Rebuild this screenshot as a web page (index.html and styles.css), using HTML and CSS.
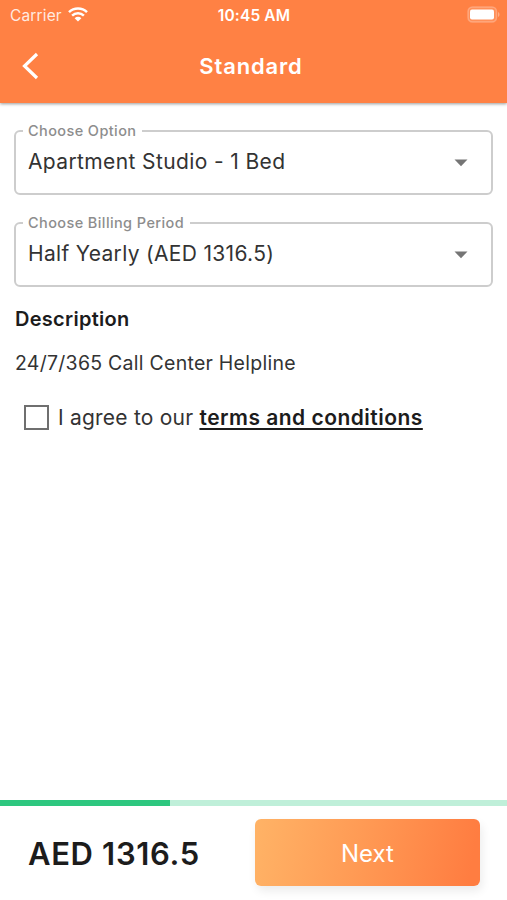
FILE: index.html
```html
<!DOCTYPE html>
<html lang="en">
<head>
<meta charset="utf-8">
<title>Standard</title>
<link rel="stylesheet" href="styles.css">
</head>
<body>
<div class="screen">
  <header class="header">
    <div class="status">
      <div class="status-left">
        <span class="carrier">Carrier</span>
        <svg class="wifi" width="20" height="15" viewBox="0 0 20 15" fill="none" stroke="#fff" stroke-width="2.5">
          <path d="M1 5.1C6 .2 14 .2 19 5.1"/>
          <path d="M4.1 8.6c3.4-3.2 8.4-3.2 11.8 0"/>
          <path d="M10 14.6L6.600 11.200c2-1.800 4.800-1.800 6.800 0z" fill="#fff" stroke="none"/>
        </svg>
      </div>
      <span class="clock">10:45 AM</span>
      <div class="status-right">
        <svg width="34" height="18" viewBox="0 0 34 18">
          <rect x="1" y="1" width="28.500" height="15" rx="4.500" fill="#fff" fill-opacity=".12" stroke="#fff" stroke-opacity=".25" stroke-width="1.500"/>
          <rect x="3" y="3.500" width="24" height="10" rx="2" fill="#fff"/>
          <path d="M31 6v5c2-.8 2-4.200 0-5z" fill="#fff" fill-opacity=".35"/>
        </svg>
      </div>
    </div>
    <div class="navbar">
      <svg class="back" width="18" height="28" viewBox="0 0 18 28" fill="none" stroke="#fff" stroke-width="3.200"><path d="M16 2L3.500 14l12.500 12"/></svg>
      <h1 class="title">Standard</h1>
    </div>
  </header>
  <main class="content">
    <fieldset class="field">
      <legend class="label">Choose Option</legend>
      <div class="select"><span class="value">Apartment Studio - 1 Bed</span><svg width="14" height="8" viewBox="0 0 14 8"><path d="M.5.500h13L7 7.300z" fill="#757575"/></svg></div>
    </fieldset>
    <fieldset class="field">
      <legend class="label">Choose Billing Period</legend>
      <div class="select"><span class="value value-period">Half Yearly (AED 1316.5)</span><svg width="14" height="8" viewBox="0 0 14 8"><path d="M.5.500h13L7 7.300z" fill="#757575"/></svg></div>
    </fieldset>
    <h2 class="heading">Description</h2>
    <p class="text">24/7/365 Call Center Helpline</p>
    <div class="agree">
      <span class="checkbox"></span>
      <p class="agree-text">I agree to our <a class="terms">terms and conditions</a></p>
    </div>
  </main>
  <footer class="footer">
    <div class="progress"><div class="progress-bar"></div></div>
    <div class="actions">
      <div class="price">AED 1316.5</div>
      <button class="next">Next</button>
    </div>
  </footer>
</div>
</body>
</html>
```

FILE: styles.css
```css
* { box-sizing: border-box; }
body { margin: 0; font-family: Inter, "Liberation Sans", sans-serif; background: #fff; color: #333; }
h1, h2, p { margin: 0; }
svg { display: block; }
.screen { width: 507px; height: 900px; display: flex; flex-direction: column; white-space: nowrap; overflow: hidden; }
.header { height: 103px; flex: none; background: #ff8144; color: #fff; box-shadow: 0 1px 3px rgba(0, 0, 0, .4); }
.status { height: 30px; padding: 0 6px 0 10px; display: grid; grid-template-columns: 1fr auto 1fr; align-items: center; }
.status-left { display: flex; align-items: center; gap: 6px; color: rgba(255, 255, 255, .85); }
.status-right { display: flex; justify-content: flex-end; padding-bottom: 1px; }
.wifi { margin-top: -1px; }
.carrier { font-size: 15.5px; letter-spacing: .15px; }
.clock { font-size: 15.5px; font-weight: 600; letter-spacing: .15px; margin-left: -3px; }
.navbar { height: 73px; display: grid; grid-template-columns: 1fr auto 1fr; align-items: center; padding: 0 6px 2px 21px; }
.navbar::after { content: ""; }
.title { font-size: 22px; font-weight: 600; letter-spacing: .85px; margin-left: -20px; }
.content { flex: 1; padding: 20px 14px 0; }
.field { height: 72px; margin: 0 0 20px; padding: 0 23px 0 7px; border: 2px solid #cdcdcd; border-radius: 6px; min-width: 0; }
.label { height: 15px; padding: 0 6px 0 5px; font-size: 14.5px; line-height: 16px; font-weight: 500; color: #8d8d8d; letter-spacing: .4px; }
.select { height: 46px; display: flex; align-items: center; justify-content: space-between; padding-left: 5px; }
.select svg { margin-top: 4px; }
.value { font-size: 21px; letter-spacing: .38px; }
.value-period { letter-spacing: .32px; }
.heading { font-size: 20px; line-height: 26px; font-weight: 600; color: #1c1c1c; margin: -1px 0 0 1px; letter-spacing: .28px; }
.text { font-size: 19.5px; line-height: 26px; margin: 18px 0 0 1px; letter-spacing: .26px; }
.agree { display: flex; align-items: center; margin-top: 27px; height: 28px; padding-left: 10px; font-size: 21px; }
.checkbox { width: 25px; height: 25px; border: 2px solid #6f6f6f; margin-right: 9px; }
.agree-text { letter-spacing: .22px; }
.terms { font-weight: 600; color: #1c1c1c; letter-spacing: .48px; text-decoration: underline; text-decoration-thickness: 2px; text-underline-offset: 3px; text-decoration-skip-ink: none; }
.footer { flex: none; height: 100px; }
.progress { height: 6px; background: #bfefd9; }
.progress-bar { height: 6px; width: 170px; background: #2ec77f; }
.actions { height: 93px; display: flex; align-items: center; justify-content: space-between; padding: 0 27px 0 28px; }
.price { font-size: 31px; font-weight: 600; color: #1c1c1c; letter-spacing: .65px; padding-top: 2px; }
.next { width: 225px; height: 67px; padding: 2px 0 0; border: 0; border-radius: 6px; background: linear-gradient(100deg, #ffb366 0%, #ff9b55 45%, #ff7d41 95%); box-shadow: 2px 5px 10px rgba(0, 0, 0, .08); color: #fff; font-family: inherit; font-size: 24px; }
```
